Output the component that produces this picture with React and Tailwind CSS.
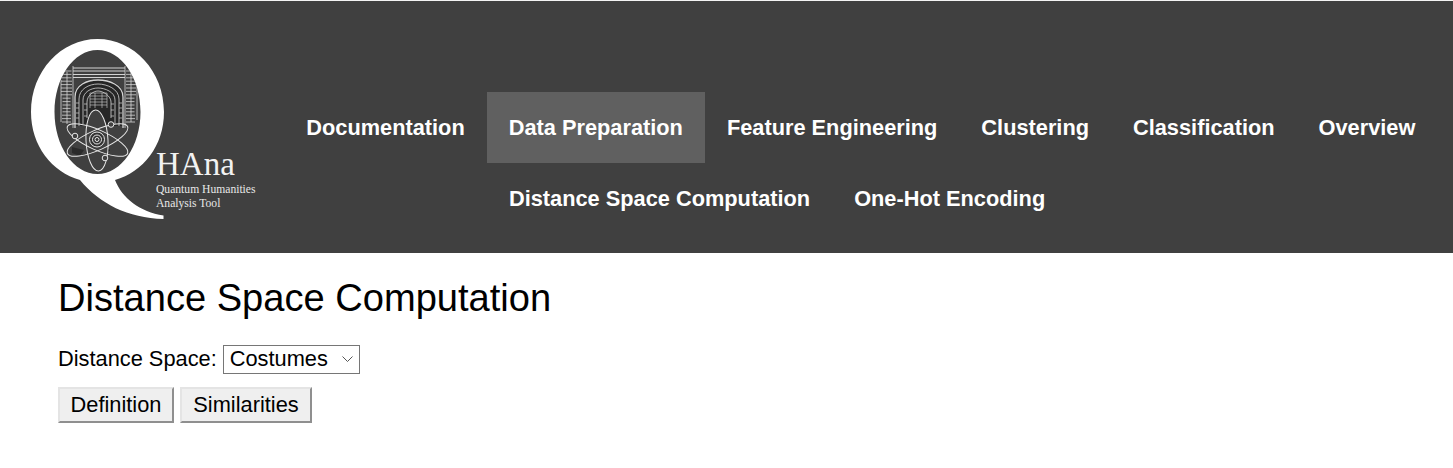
const navTop = ['Documentation', 'Data Preparation', 'Feature Engineering', 'Clustering', 'Classification', 'Overview'];
const navSub = ['Distance Space Computation', 'One-Hot Encoding'];

// shelves either side of the arch, [x, y, length]
const shelves = [];
for (let y = 71; y <= 124; y += 3.4) {
  const j = Math.round(y * 7) % 4;
  shelves.push([61 + j / 2, y, 11 - j]);
  shelves.push([126, y, 10 - j / 2]);
}

const Logo = () => (
  <svg viewBox="31 39 226 181" className="w-[226px] h-[181px] shrink-0">
    <defs>
      <clipPath id="counter">
        <ellipse cx="97.5" cy="112" rx="43" ry="62" />
      </clipPath>
    </defs>
    {/* Q ring and tail */}
    <path
      fillRule="evenodd"
      fill="#fff"
      d="M97.5 39C134 39 164 71 164 112C164 146 143 172 115 180C122 198 140 212 163.500 215.500L163.500 219C128 218 100 204 80 180C52 172 31 146 31 112C31 71 61 39 97.5 39ZM97.500 50C73.500 50 54.500 78 54.500 112C54.500 146 73.500 174 97.500 174C121.500 174 140.500 146 140.500 112C140.500 78 121.500 50 97.500 50Z"
    />
    {/* library arch */}
    <g clipPath="url(#counter)" className="blur-[0.3px]">
      <path d="M74 98C74 84 86 79 98 79C110 79 124 84 124 98V126H74Z" fill="#262626" />
      <g fill="none" stroke="#d4d4d4" strokeWidth="0.8">
        {shelves.map(([x, y, len], i) => (
          <path key={i} d={`M${x} ${y}h${len}`} />
        ))}
        <path d="M73 68H125M73 71H125M73 74.500H125M73 77.500H125" strokeWidth="1" />
        <path d="M73 66V128M125 66V128M61 80V122M137 72V120M67 72V124M131 72V122" />
        <path d="M75 128V97C75 85 87 80 98 80C109 80 123 85 123 97V128" strokeWidth="1.3" />
        <path d="M79 126V99C79 89 89 84 98 84C107 84 119 89 119 99V126" />
        <path d="M83 124V100C83 92 91 88 98 88C105 88 115 92 115 100V124" />
        <path d="M87 118V102C87 96 93 91 98 91C103 91 111 96 111 102V118" />
        <path d="M90 108V93H107V108M90 96H107M90 99H107M90 102H107M90 105H107M95 93V108M102 93V108" strokeWidth="0.6" />
        <path d="M76 103H79M76 108H79M76 113H79M76 118H79M119 103H122M119 108H122M119 113H122M119 118H122M84 104H87M84 110H87M84 116H87M111 104H114M111 110H114M111 116H114" strokeWidth="0.7" />
      </g>
    </g>
    {/* atom */}
    <path d="M100 146L110 150L105 155Z" fill="#111" />
    <path d="M72 147L84 150L80 156L72 153Z" fill="#2a2a2a" />
    <g fill="none" stroke="#e8e8e8" strokeWidth="1">
      <ellipse cx="97" cy="140.500" rx="11" ry="30.500" transform="rotate(-3 97 140.500)" fill="#404040" />
      <ellipse cx="97.500" cy="140" rx="33" ry="10" transform="rotate(24 97.500 140)" />
      <ellipse cx="97.500" cy="140" rx="33" ry="10" transform="rotate(-24 97.500 140)" />
      <circle cx="97" cy="139.500" r="7.500" fill="#333" />
      <circle cx="97" cy="139.500" r="4.500" />
      <circle cx="97" cy="139.500" r="2" />
      <circle cx="75" cy="136" r="2.800" fill="#404040" />
      <circle cx="111" cy="124.500" r="2.800" fill="#404040" />
      <circle cx="105" cy="158" r="2.800" fill="#404040" />
    </g>
    <text x="156" y="174.500" fill="#f2f2f2" fontSize="33" fontFamily="'Liberation Serif', serif">HAna</text>
    <text x="156" y="193" fill="#e8e8e8" fontSize="11.600" fontFamily="'Liberation Serif', serif">Quantum Humanities</text>
    <text x="156" y="207" fill="#e8e8e8" fontSize="11.600" fontFamily="'Liberation Serif', serif">Analysis Tool</text>
  </svg>
);

const NavItem = ({ label, active }) => (
  <a className={`px-[22px] pt-[2px] h-[71px] flex items-center text-white font-bold text-[21.77px] ${active ? 'bg-[#606060]' : ''}`}>
    {label}
  </a>
);

const btn = 'h-[36px] bg-[#efefef] border-2 border-t-[#e4e4e4] border-l-[#e4e4e4] border-r-[#8f8f8f] border-b-[#8f8f8f] text-[21.8px]';

export default function App() {
  return (
    <div className="min-h-[468px] bg-white text-black font-['Liberation_Sans',Arial,sans-serif]">
      <div className="h-px bg-[#f4f4f4]" />
      <header className="h-[252px] bg-[#404040] flex pl-[31px] pt-[38px]">
        <Logo />
        <nav className="ml-[27.3px] pt-[53px]">
          <div className="flex">
            {navTop.map((n) => (
              <NavItem key={n} label={n} active={n === 'Data Preparation'} />
            ))}
          </div>
          <div className="flex pl-[202.7px]">
            {navSub.map((n) => (
              <NavItem key={n} label={n} />
            ))}
          </div>
        </nav>
      </header>
      <main className="px-[58px]">
        <h1 className="text-[38.1px] leading-[41px] font-normal mt-[25px]">Distance Space Computation</h1>
        <div className="flex items-center mt-[26px] text-[21.8px] h-[29px]">
          <span>Distance Space:</span>
          <div className="relative ml-[6px]">
            <select className="block appearance-none w-[137px] h-[29px] border border-[#767676] bg-white pl-[6px] pt-0 pb-[3px] leading-[23px] text-[21.8px]">
              <option>Costumes</option>
            </select>
            <svg viewBox="0 0 11 6" className="absolute right-[7px] top-[11px] w-[11px] h-[6px] pointer-events-none">
              <path d="M.5 .5L5.500 5.500L10.500 .5" fill="none" stroke="#555" strokeWidth="1" />
            </svg>
          </div>
        </div>
        <div className="flex gap-[6px] mt-[13px]">
          <button className={`${btn} w-[116px]`}>Definition</button>
          <button className={`${btn} w-[132px]`}>Similarities</button>
        </div>
      </main>
    </div>
  );
}
